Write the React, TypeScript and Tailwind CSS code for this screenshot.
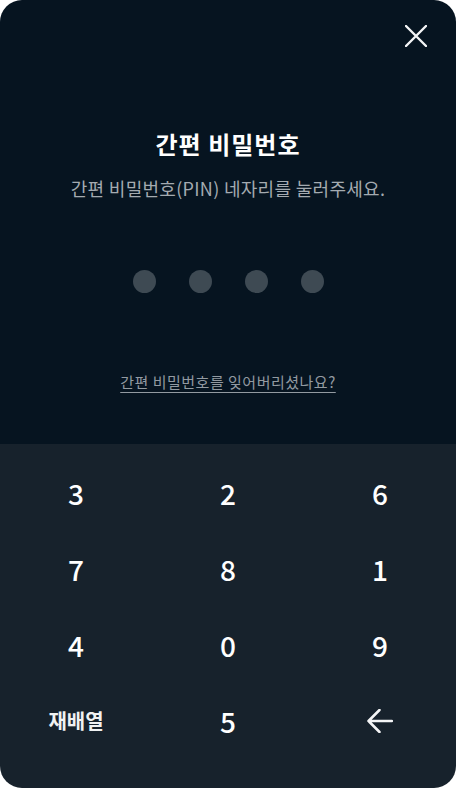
import React from 'react'

const keys = ['3', '2', '6', '7', '8', '1', '4', '0', '9']

const font = { fontFamily: '"Noto Sans CJK KR", "Noto Sans", sans-serif' }

function CloseIcon() {
  return (
    <svg width="22" height="22" viewBox="0 0 22 22" fill="none">
      <path d="M1 1L21 21M21 1L1 21" stroke="#f4f5f6" strokeWidth="2.4" strokeLinecap="round" />
    </svg>
  )
}

function BackIcon() {
  return (
    <svg width="26" height="24" viewBox="0 0 26 24" fill="none">
      <path d="M12.5 1L1.5 12L12.5 23M1.5 12H25" stroke="#f4f5f6" strokeWidth="2.5" strokeLinecap="round" strokeLinejoin="round" />
    </svg>
  )
}

export default function App() {
  return (
    <div className="w-[456px] h-[788px] bg-white" style={font}>
      <div className="w-full h-full rounded-[22px] overflow-hidden flex flex-col">
        {/* PIN entry */}
        <section className="h-[444px] bg-[#061420] flex flex-col items-center">
          <div className="w-full flex justify-end pt-[25px] pr-[29px]">
            <button className="w-[22px] h-[22px]">
              <CloseIcon />
            </button>
          </div>
          <h1 className="mt-[82px] text-[24px] leading-[30px] font-bold tracking-[1px] text-white">간편 비밀번호</h1>
          <p className="mt-[17px] text-[18px] leading-[24px] tracking-[0.3px] text-[#a4abb1]">간편 비밀번호(PIN) 네자리를 눌러주세요.</p>
          <div className="mt-[70px] flex gap-[33px]">
            {[0, 1, 2, 3].map(i => (
              <span key={i} className="w-[23px] h-[23px] rounded-full bg-[#3e4a53]" />
            ))}
          </div>
          <a className="mt-[79px] text-[15px] leading-[20px] tracking-[0.5px] text-[#929aa1] underline underline-offset-[4px]">
            간편 비밀번호를 잊어버리셨나요?
          </a>
        </section>

        {/* Keypad */}
        <section className="flex-1 bg-[#17222c] pt-[11px] grid grid-cols-3 content-start">
          {keys.map(k => (
            <button key={k} className="h-[76px] flex items-center justify-center text-[28px] font-medium text-white">
              {k}
            </button>
          ))}
          <button className="h-[76px] flex items-center justify-center text-[20px] font-bold text-[#f0f2f3]">재배열</button>
          <button className="h-[76px] flex items-center justify-center text-[28px] font-medium text-white">5</button>
          <button className="h-[76px] flex items-center justify-center">
            <BackIcon />
          </button>
        </section>
      </div>
    </div>
  )
}
